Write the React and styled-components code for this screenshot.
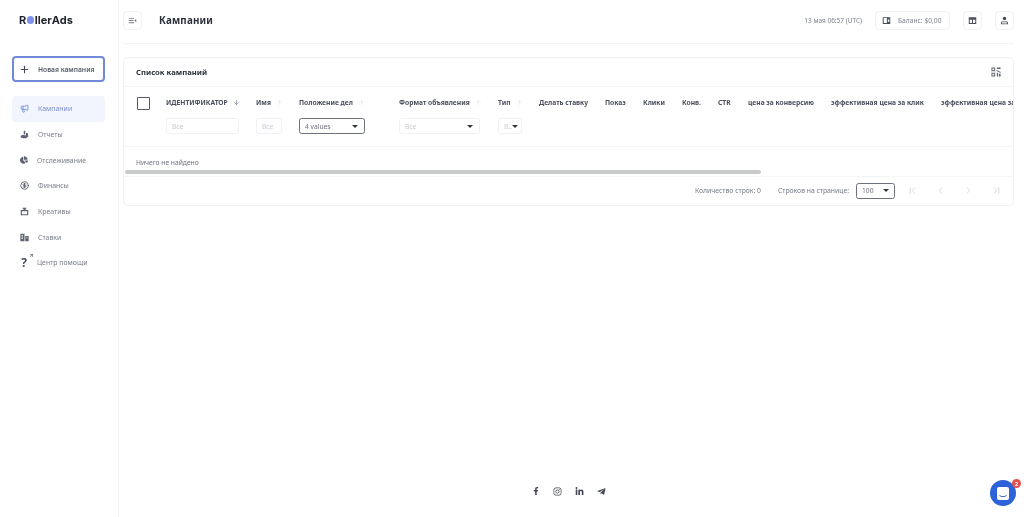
import React from "react";
import styled, { createGlobalStyle } from "styled-components";
import { FaFacebookF, FaLinkedinIn, FaInstagram, FaTelegramPlane, FaChartPie } from "react-icons/fa";
import { Plus, ArrowDown, ArrowUp, ChevronLeft, ChevronRight, ChevronFirst, ChevronLast, Megaphone, CircleDollarSign, ArrowUpRight } from "lucide-react";

const Global = createGlobalStyle`
  html, body { margin: 0; padding: 0; background: #fff; }
  body { font-family: "Noto Sans", "Open Sans", sans-serif; color: #3a3f4b; }
  * { box-sizing: border-box; }
`;

const Page = styled.div`
  display: flex; width: 1024px; height: 517px; overflow: hidden; position: relative; background: #fff;
  filter: blur(0.3px);
`;
const Sidebar = styled.aside`
  width: 119px; flex: none; border-right: 1px solid #f0f1f4; padding: 0 13px 0 12px;
  display: flex; flex-direction: column;
`;
const Logo = styled.div`
  height: 40px; display: flex; align-items: center; padding-left: 7px;
  font-family: "Inter", sans-serif; font-weight: 700; font-size: 11px; color: #20242e;
`;
const LogoDot = styled.span`
  width: 7.5px; height: 7.5px; margin: 0 0.5px; border-radius: 50%; background: #7f93ee; display: inline-block;
`;
const NewButton = styled.div`
  margin-top: 16px; height: 26px; border: 2px solid #7189d8; border-radius: 4px;
  display: flex; align-items: center; gap: 8px; padding-left: 5px;
  font-size: 6.7px; font-weight: 600; color: #555a66; white-space: nowrap;
  svg { color: #444854; }
`;
const Nav = styled.nav`
  margin-top: 14px; display: flex; flex-direction: column;
`;
const NavItem = styled.div`
  height: 25.7px; border-radius: 4px; display: flex; align-items: center; gap: 9px; padding-left: 8px;
  font-size: 6.9px; white-space: nowrap; position: relative;
  background: ${p => (p.$active ? "#f2f5fd" : "transparent")};
  color: ${p => (p.$active ? "#7f8fd0" : "#777c87")};
  svg { flex: none; color: ${p => (p.$active ? "#8096dd" : "#5f6470")}; }
`;
const Question = styled.span`
  width: 8px; font-size: 12px; font-weight: 700; color: #4a4f5c; text-align: center; line-height: 1;
`;
const Corner = styled.span`
  position: absolute; left: 17px; top: 3px; line-height: 0; svg { color: #4a4f5c; }
`;
const Main = styled.main`
  flex: 1; min-width: 0; padding: 0 10px 0 4px; display: flex; flex-direction: column;
`;
const Header = styled.header`
  height: 44px; flex: none; border-bottom: 1px solid #f2f3f5; display: flex; align-items: center; padding-bottom: 3px;
`;
const IconBtn = styled.div`
  width: 19px; height: 19px; border: 1px solid #f0f1f4; border-radius: 4px; display: flex; align-items: center; justify-content: center;
  color: ${p => (p.$muted ? "#777b85" : "#4a4f5c")}; flex: none;
`;
const PageTitle = styled.h1`
  margin: 0 0 0 17px; font-size: 9.8px; font-weight: 700; color: #2c303a; letter-spacing: 0.2px; flex: 1;
`;
const DateText = styled.span`
  font-size: 6.5px; color: #7c818c; margin-right: 13px;
`;
const Balance = styled.div`
  width: 75px; height: 19px; border: 1px solid #f0f1f4; border-radius: 4px; display: flex; align-items: center; gap: 7px; padding-left: 6px;
  font-size: 6.7px; color: #7c818c; margin-right: 13px; svg { color: #4a4f5c; }
`;
const HeadGap = styled.span` width: 13px; `;
const Card = styled.section`
  margin-top: 13px; height: 149px; border: 1px solid #f0f1f4; border-radius: 5px; display: flex; flex-direction: column; overflow: hidden; position: relative;
`;
const CardHead = styled.div`
  height: 29px; flex: none; display: flex; align-items: center; justify-content: space-between; padding: 0 12px 1px 12px;
  border-bottom: 1px solid #f4f5f7;
  font-size: 7.7px; font-weight: 700; color: #2c303a; svg { color: #5f6470; }
`;
const TableHead = styled.div`
  height: 60px; flex: none; display: flex; padding: 9px 0 0 13px; border-bottom: 1px solid #f4f5f7; overflow: hidden;
`;
const Check = styled.div`
  width: 29px; flex: none; padding-top: 1px;
  &::before { content: ""; display: block; width: 11px; height: 11px; border: 1.4px solid #55596a; border-radius: 1px; }
`;
const Col = styled.div`
  width: ${p => p.$w}px; flex: none; display: flex; flex-direction: column; gap: 9px;
`;
const ColTitle = styled.div`
  height: 13px; display: flex; align-items: center; gap: 5px; white-space: nowrap;
  font-size: 6.7px; font-weight: 700; color: #4b4f5b;
  svg { color: ${p => (p.$on ? "#6b6f7a" : "#dfe1e6")}; flex: none; }
`;
const Field = styled.div`
  width: ${p => p.$w}px; height: 16px; border: 1px solid ${p => (p.$dark ? "#6d717b" : "#f0f1f4")}; border-radius: 2.5px;
  display: flex; align-items: center; justify-content: space-between; padding: 0 ${p => p.$pr ?? 5}px 0 5px;
  font-size: 6.7px; color: ${p => (p.$dark ? "#6d717b" : "#c8cbd2")}; flex: none;
`;
const Caret = styled.span`
  width: 0; height: 0; border-left: 3.5px solid transparent; border-right: 3.5px solid transparent; border-top: 3.5px solid #33363f;
`;
const Empty = styled.div`
  height: 23px; flex: none; display: flex; align-items: center; padding: 7px 0 0 12px; font-size: 6.7px; color: #6f747f;
`;
const Track = styled.div`
  height: 4px; flex: none; margin-left: 1px; width: 636px; background: #c9cacc; border-radius: 2px;
`;
const Foot = styled.div`
  flex: 1; display: flex; align-items: center; justify-content: flex-end; padding-right: 11px; border-top: 1px solid #f4f5f7; margin-top: 1.5px;
  font-size: 6.8px; color: #757a85;
`;
const FootGap = styled.span` width: ${p => p.$w}px; `;
const Pager = styled.div`
  display: flex; gap: 17px; margin-left: 12px; color: #d5d7dc;
`;
const Spacer = styled.div` flex: 1; `;
const Socials = styled.div`
  height: 30px; flex: none; display: flex; align-items: flex-start; justify-content: center; gap: 13px; color: #444854;
`;
const Chat = styled.div`
  position: absolute; right: 8px; bottom: 11px; width: 26px; height: 26px; border-radius: 50%; background: #2d62d8;
  display: flex; align-items: center; justify-content: center;
`;
const Badge = styled.span`
  position: absolute; top: -1px; right: -5px; width: 9px; height: 9px; border-radius: 50%; background: #e0514f; color: #fff;
  font-size: 6px; font-weight: 700; display: flex; align-items: center; justify-content: center;
`;

const Ico = ({ children, size = 9 }) => (
  <svg width={size} height={size} viewBox="0 0 12 12" fill="currentColor">{children}</svg>
);
const ReportIcon = () => <Ico><path d="M5 1h2v5H5zM8 4h2.500v3H8zM1 8c2-2 3-1 5-1h5v1.500L8 11H4L1 10z" /></Ico>;
const CreativeIcon = () => <Ico><path d="M3.500 1h5v1.200h-1V4H11v7H1V4h3.500V2.200h-1zM2.500 5.500V9.500h7V5.500z" fillRule="evenodd" /></Ico>;
const BetIcon = () => <Ico><path d="M0.500 1H6v10H0.500zM2 3v1.500h2V3zM2 6v1.500h2V6zM7 4h4.500v7H7zM8.500 6v1h1.500V6z" fillRule="evenodd" /></Ico>;
const MenuIcon = () => <Ico><path d="M1 2.500h7v1.200H1zM1 5.400h6v1.200H1zM1 8.300h7v1.200H1zM11 3.500v5L8.500 6z" /></Ico>;
const WalletIcon = () => <Ico><path d="M1 1.500h10v9H1zM2.300 2.800v6.400h4.200V2.800zM7.800 4.500v3h2V4.500z" fillRule="evenodd" /></Ico>;
const TableIcon = () => <Ico><path d="M1 1.500h10v9H1zM2.300 5v4.200h3V5zM6.600 5v4.200h3.100V5z" fillRule="evenodd" /></Ico>;
const UserIcon = () => <Ico><path d="M6 1a2.400 2.400 0 1 1 0 4.800A2.400 2.400 0 0 1 6 1zM2 7.200h8L11 11H1zM3 8.300l-.5 1.600h7L9 8.300z" fillRule="evenodd" /></Ico>;
const ColumnsIcon = () => (
  <Ico size={10}>
    <path d="M0.500 0.500h4.500v4.500H0.500zM1.700 1.700v2.100h2.100V1.700zM7 0.500h4.500v2H7zM6.500 3.500l5 2.500v1.300l-5-2.500zM0.500 7h4.500v4.500H0.500zM1.700 8.200v2.100h2.100V8.200zM7 7h1.500v4.500H7zM9.500 8h2v3.500h-2z" fillRule="evenodd" />
  </Ico>
);

const nav = [
  ["Кампании", <Megaphone size={9} strokeWidth={2.6} />, true],
  ["Отчеты", <ReportIcon />],
  ["Отслеживание", <FaChartPie size={8} />],
  ["Финансы", <CircleDollarSign size={9} strokeWidth={2.4} />],
  ["Креативы", <CreativeIcon />],
  ["Ставки", <BetIcon />],
];
const SortTitle = ({ children, on }) => (
  <ColTitle $on={on}>{children}{on ? <ArrowDown size={7} /> : <ArrowUp size={7} />}</ColTitle>
);

export default function App() {
  return (
    <Page>
      <Global />
      <Sidebar>
        <Logo>R<LogoDot />ller<span>Ads</span></Logo>
        <NewButton><Plus size={11} strokeWidth={2.4} />Новая кампания</NewButton>
        <Nav>
          {nav.map(([t, icon, a]) => <NavItem key={t} $active={a}>{icon}{t}</NavItem>)}
          <NavItem><Question>?</Question><Corner><ArrowUpRight size={5} strokeWidth={3} /></Corner>Центр помощи</NavItem>
        </Nav>
      </Sidebar>
      <Main>
        <Header>
          <IconBtn $muted><MenuIcon /></IconBtn>
          <PageTitle>Кампании</PageTitle>
          <DateText>13 мая 06:57 (UTC)</DateText>
          <Balance><WalletIcon />Баланс: $0,00</Balance>
          <IconBtn><TableIcon /></IconBtn>
          <HeadGap />
          <IconBtn><UserIcon /></IconBtn>
        </Header>
        <Card>
          <CardHead>Список кампаний<ColumnsIcon /></CardHead>
          <TableHead>
            <Check />
            <Col $w={90}><SortTitle on>ИДЕНТИФИКАТОР</SortTitle><Field $w={73}>Все</Field></Col>
            <Col $w={43}><SortTitle>Имя</SortTitle><Field $w={26}>Все</Field></Col>
            <Col $w={100}><SortTitle>Положение дел</SortTitle><Field $w={66} $dark $pr={6}>4 values<Caret /></Field></Col>
            <Col $w={99}><SortTitle>Формат объявления</SortTitle><Field $w={81} $pr={6}>Все<Caret /></Field></Col>
            <Col $w={41}><SortTitle>Тип</SortTitle><Field $w={24} $pr={4}>В..<Caret /></Field></Col>
            <Col $w={66}><ColTitle>Делать ставку</ColTitle></Col>
            <Col $w={38}><ColTitle>Показ</ColTitle></Col>
            <Col $w={39}><ColTitle>Клики</ColTitle></Col>
            <Col $w={36}><ColTitle>Конв.</ColTitle></Col>
            <Col $w={30}><ColTitle>CTR</ColTitle></Col>
            <Col $w={83}><ColTitle>цена за конверсию</ColTitle></Col>
            <Col $w={110}><ColTitle>эффективная цена за клик</ColTitle></Col>
            <Col $w={120}><ColTitle>эффективная цена за показ</ColTitle></Col>
          </TableHead>
          <Empty>Ничего не найдено</Empty>
          <Track />
          <Foot>
            Количество строк: 0
            <FootGap $w={17} />
            Строков на странице:
            <FootGap $w={7} />
            <Field $w={39} $dark $pr={5}>100<Caret /></Field>
            <Pager>
              <ChevronFirst size={11} /><ChevronLeft size={11} /><ChevronRight size={11} /><ChevronLast size={11} />
            </Pager>
          </Foot>
        </Card>
        <Spacer />
        <Socials>
          <FaFacebookF size={8} /><FaInstagram size={9} /><FaLinkedinIn size={9} /><FaTelegramPlane size={9} />
        </Socials>
      </Main>
      <Chat>
        <svg width="12" height="13" viewBox="0 0 12 13"><path d="M2 0h8a2 2 0 0 1 2 2v9a2 2 0 0 1-2 2H2a2 2 0 0 1-2-2V2a2 2 0 0 1 2-2z" fill="#fff" /><path d="M2.500 8.500c2 1.600 5 1.600 7 0" stroke="#2d62d8" fill="none" /></svg>
        <Badge>2</Badge>
      </Chat>
    </Page>
  );
}
